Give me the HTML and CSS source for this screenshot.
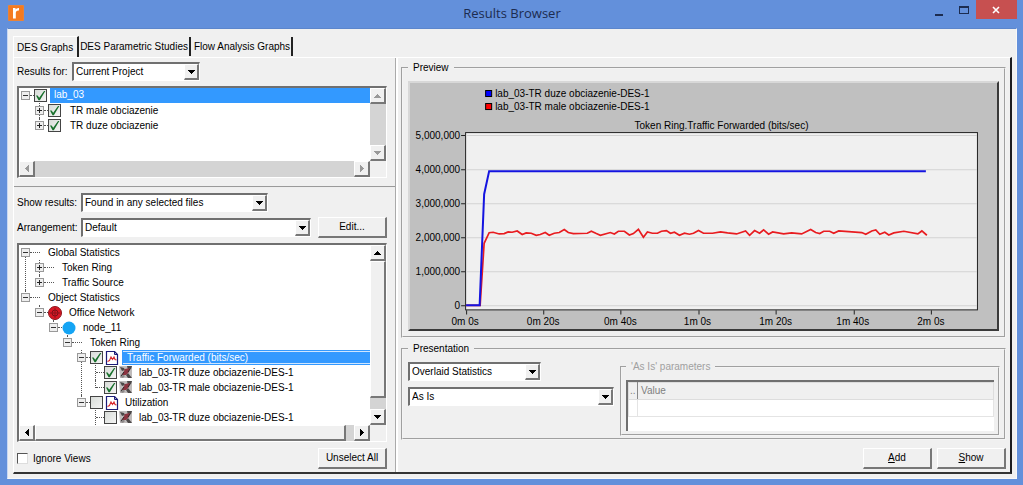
FILE: index.html
```html
<!DOCTYPE html>
<html lang="en">
<head>
<meta charset="utf-8">
<title>Results Browser</title>
<link rel="stylesheet" href="styles.css">
</head>
<body>
<svg class="defs" aria-hidden="true">
  <symbol id="up" viewBox="0 0 7 4"><path d="M3 0h1v1h1v1h1v1h1v1H0V3h1V2h1V1h1z"/></symbol>
  <symbol id="down" viewBox="0 0 7 4"><path d="M0 0h7v1H6v1H5v1H4v1H3V3H2V2H1V1H0z"/></symbol>
  <symbol id="left" viewBox="0 0 4 7"><path d="M4 0v7H3V6H2V5H1V4H0V3h1V2h1V1h1V0z"/></symbol>
  <symbol id="right" viewBox="0 0 4 7"><path d="M0 0v7h1V6h1V5h1V4h1V3H3V2H2V1H1V0z"/></symbol>
  <symbol id="graph" viewBox="0 0 14 14">
    <path d="M1.500.5h8l3 3v10h-11z" fill="#fff" stroke="#1c1c78" stroke-width="1.200"/>
    <path d="M9.500.5v3h3" fill="none" stroke="#1c1c78"/>
    <path d="M2.500 10.500l2-1 1.500-3.500 1.500 2.500 1.500-2.500 1 2.500 1.500.5" fill="none" stroke="#d8282c" stroke-width="1.100"/>
  </symbol>
  <symbol id="run" viewBox="0 0 14 14">
    <path d="M0 0h13v12H1z" fill="#c0bcbc"/>
    <path d="M1 1l4 1 1 2-3 1zM8 0h5l-1 3-3 1zM9 7l4 5H9L7 9z" fill="#4c4848"/>
    <path d="M1 11l3-3 2 2-2 2z" fill="#8c8888"/>
    <path d="M3 9l3-6 5-1-1 4-3 3z" fill="#8c3440"/>
    <path d="M2 10l3-4M9 6l2-3" stroke="#2c2828"/>
  </symbol>
</svg>

<header class="titlebar">
  <svg class="logo" viewBox="0 0 16 16" aria-hidden="true">
    <rect width="16" height="16" rx="1" fill="#e8833a"/>
    <rect x="1" y="1" width="14" height="14" fill="#f47a20"/>
    <path d="M5 13.500V3h2.500v1.500Q8.500 2.800 11 3v2.500Q7.800 5.200 7.800 8v5.500z" fill="#fff"/>
  </svg>
  <h1>Results Browser</h1>
  <div class="winbtns">
    <button class="win" aria-label="Minimize"><svg width="8" height="12"><path d="M0 10h8v2H0z" fill="#1c2c50"/></svg></button>
    <button class="win" aria-label="Maximize"><svg width="10" height="8"><path d="M0 0h10v8H0zM1 2v5h8V2z" fill="#1c2c50" fill-rule="evenodd"/></svg></button>
    <button class="win close" aria-label="Close"><svg width="8" height="8"><path d="M1 1l6 6M7 1L1 7" stroke="#fff" stroke-width="1.600"/></svg></button>
  </div>
</header>

<main class="client">
  <nav class="tabs" role="tablist">
    <button class="tab active" role="tab" aria-selected="true">DES Graphs</button>
    <button class="tab" role="tab">DES Parametric Studies</button>
    <button class="tab" role="tab">Flow Analysis Graphs</button>
  </nav>

  <div class="page">
    <section class="side">
      <div class="block files">
        <div class="field">
          <label for="results">Results for:</label>
          <span class="combo w-s"><select id="results"><option>Current Project</option></select><span class="drop"><svg width="7" height="4"><use href="#down"/></svg></span></span>
        </div>
        <div class="pane small off">
          <ul class="tree">
            <li>
              <div class="row"><button class="exp" aria-label="Collapse"></button><i class="dash"></i><input type="checkbox" id="c1" checked><label class="sel" for="c1">lab_03</label></div>
              <ul>
                <li><div class="row"><button class="exp plus" aria-label="Expand"></button><i class="dash"></i><input type="checkbox" id="c2" checked><label class="wide" for="c2">TR male obciazenie</label></div></li>
                <li><div class="row"><button class="exp plus" aria-label="Expand"></button><i class="dash"></i><input type="checkbox" id="c3" checked><label class="wide" for="c3">TR duze obciazenie</label></div></li>
              </ul>
            </li>
          </ul>
          <div class="vbar"><button class="sb" aria-label="Scroll up"><svg width="7" height="4"><use href="#up"/></svg></button><span class="track"></span><button class="sb" aria-label="Scroll down"><svg width="7" height="4"><use href="#down"/></svg></button></div>
          <div class="hbar"><button class="sb" aria-label="Scroll left"><svg width="4" height="7"><use href="#left"/></svg></button><span class="track"></span><button class="sb" aria-label="Scroll right"><svg width="4" height="7"><use href="#right"/></svg></button></div>
        </div>
      </div>

      <div class="block stats">
        <div class="field">
          <label class="lab" for="show">Show results:</label>
          <span class="combo w-m"><select id="show"><option>Found in any selected files</option></select><span class="drop"><svg width="7" height="4"><use href="#down"/></svg></span></span>
        </div>
        <div class="field arrange">
          <label class="lab" for="arr">Arrangement:</label>
          <span class="combo grow"><select id="arr"><option>Default</option></select><span class="drop"><svg width="7" height="4"><use href="#down"/></svg></span></span>
          <button class="btn">Edit...</button>
        </div>
        <div class="pane large">
          <ul class="tree">
            <li>
              <div class="row"><button class="exp" aria-label="Collapse"></button><i class="dash long"></i><span class="plain">Global Statistics</span></div>
              <ul>
                <li><div class="row"><button class="exp plus" aria-label="Expand"></button><i class="dash long"></i><span class="plain">Token Ring</span></div></li>
                <li><div class="row"><button class="exp plus" aria-label="Expand"></button><i class="dash long"></i><span class="plain">Traffic Source</span></div></li>
              </ul>
            </li>
            <li>
              <div class="row"><button class="exp" aria-label="Collapse"></button><i class="dash long"></i><span class="plain">Object Statistics</span></div>
              <ul>
                <li>
                  <div class="row"><button class="exp" aria-label="Collapse"></button><i class="dash"></i><svg class="ico" viewBox="0 0 14 14"><circle cx="7" cy="7" r="6.500" fill="#d81824" stroke="#8c141c"/><circle cx="7" cy="7" r="3" fill="none" stroke="#7c1018"/><path d="M7 2v10M2 7h10" stroke="#8c141c"/></svg><span class="near">Office Network</span></div>
                  <ul>
                    <li>
                      <div class="row"><button class="exp" aria-label="Collapse"></button><i class="dash"></i><svg class="ico" viewBox="0 0 14 14"><circle cx="7" cy="7" r="6.500" fill="#14a4f4"/></svg><span class="near">node_11</span></div>
                      <ul>
                        <li>
                          <div class="row"><button class="exp" aria-label="Collapse"></button><i class="dash long"></i><span class="plain">Token Ring</span></div>
                          <ul>
                            <li>
                              <div class="row"><button class="exp" aria-label="Collapse"></button><i class="dash"></i><input type="checkbox" id="t1" checked><svg class="ico"><use href="#graph"/></svg><label class="sel focus" for="t1">Traffic Forwarded (bits/sec)</label></div>
                              <ul>
                                <li><div class="row"><i class="dash leaf"></i><input type="checkbox" id="t2" checked><svg class="ico"><use href="#run"/></svg><label class="near" for="t2">lab_03-TR duze obciazenie-DES-1</label></div></li>
                                <li><div class="row"><i class="dash leaf"></i><input type="checkbox" id="t3" checked><svg class="ico"><use href="#run"/></svg><label class="near" for="t3">lab_03-TR male obciazenie-DES-1</label></div></li>
                              </ul>
                            </li>
                            <li>
                              <div class="row"><button class="exp" aria-label="Collapse"></button><i class="dash"></i><input type="checkbox" id="t4"><svg class="ico"><use href="#graph"/></svg><label class="near" for="t4">Utilization</label></div>
                              <ul>
                                <li><div class="row"><i class="dash leaf"></i><input type="checkbox" id="t5"><svg class="ico"><use href="#run"/></svg><label class="near" for="t5">lab_03-TR duze obciazenie-DES-1</label></div></li>
                                <li><div class="row"><i class="dash leaf"></i><svg class="ico next"><use href="#run"/></svg></div></li>
                              </ul>
                            </li>
                          </ul>
                        </li>
                      </ul>
                    </li>
                  </ul>
                </li>
              </ul>
            </li>
          </ul>
          <div class="vbar"><button class="sb" aria-label="Scroll up"><svg width="7" height="4"><use href="#up"/></svg></button><span class="thumb"></span><span class="track"></span><button class="sb" aria-label="Scroll down"><svg width="7" height="4"><use href="#down"/></svg></button></div>
          <div class="hbar"><button class="sb" aria-label="Scroll left"><svg width="4" height="7"><use href="#left"/></svg></button><span class="thumb"></span><span class="track"></span><button class="sb" aria-label="Scroll right"><svg width="4" height="7"><use href="#right"/></svg></button></div>
        </div>
        <div class="foot">
          <label class="ignore"><input class="box" type="checkbox"> Ignore Views</label>
          <button class="btn">Unselect All</button>
        </div>
      </div>
    </section>

    <section class="view">
      <fieldset class="preview">
        <legend>Preview</legend>
        <div class="chart">
          <svg viewBox="410 83 586 246" role="img" aria-label="Token Ring traffic forwarded">
            <g stroke="#000"><rect x="485.500" y="90.500" width="6" height="6" fill="#00f"/><rect x="485.500" y="103.500" width="6" height="6" fill="#f00"/></g>
            <text x="495" y="97">lab_03-TR duze obciazenie-DES-1</text>
            <text x="495" y="110">lab_03-TR male obciazenie-DES-1</text>
            <text class="mid" x="721" y="129">Token Ring.Traffic Forwarded (bits/sec)</text>
            <rect x="465.500" y="132.500" width="511" height="177" fill="#f0f0f0" stroke="#222"/>
            <path d="M467 135.500h509M467 169.500h509M467 203.500h509M467 237.500h509M467 271.500h509M467 305.500h509" stroke="#d2d2d2"/>
            <path d="M461 135.500h4M461 169.500h4M461 203.500h4M461 237.500h4M461 271.500h4M461 305.500h4M466.500 310v4M543.500 310v4M620.500 310v4M698.500 310v4M775.500 310v4M853.500 310v4M930.500 310v4" stroke="#222"/>
            <g class="end"><text x="460" y="139">5,000,000</text><text x="460" y="173">4,000,000</text><text x="460" y="207">3,000,000</text><text x="460" y="241">2,000,000</text><text x="460" y="275">1,000,000</text><text x="460" y="309">0</text></g>
            <g class="mid"><text x="465" y="325">0m 0s</text><text x="543" y="325">0m 20s</text><text x="620" y="325">0m 40s</text><text x="697" y="325">1m 0s</text><text x="775" y="325">1m 20s</text><text x="852" y="325">1m 40s</text><text x="930" y="325">2m 0s</text></g>
            <polyline fill="none" stroke="#e81c20" stroke-width="1.700" points="466,305 480,305 484,243 489,232.500 493,232 499,233.700 504,233.300 508,231.700 512,232 517,230.700 522,234.300 526,232.700 531,233 536,235 540,234.300 545,232.300 549,235 554,233 559,232.300 564,229.300 568,232.300 573,233.300 587,233 591,231 596,233.300 600,235 610,232.300 614,233.700 618,231 624,231 629,234.700 633,233.300 638,229 643,237 647,231.700 652,233 657,233 661,231 666,230.300 670,233 674,232 679,235 684,233 689,234 693,233 698,230.300 703,233 712,233 720,231.700 727,232.700 736,233.700 745,230.700 749,235 754,230.300 759,233 763,229.700 768,234 772,231.700 783,233.700 791,232.700 801,233.700 810,229.300 815,232.300 819,233.300 823,231 829,231 833,233 838,230.700 861,232.300 865,234 871,230.700 875,229.700 879,234 884,232 888,234.700 893,232.700 903,231 917,233.700 921,230.700 926,235"/>
            <polyline fill="none" stroke="#1414e0" stroke-width="2" points="466,305 479.500,305 484,194 489,171 925,171"/>
          </svg>
        </div>
      </fieldset>

      <fieldset class="present">
        <legend>Presentation</legend>
        <div class="cols">
          <div class="modes">
            <span class="combo w-p"><select aria-label="Layout"><option>Overlaid Statistics</option></select><span class="drop"><svg width="7" height="4"><use href="#down"/></svg></span></span>
            <span class="combo"><select aria-label="Filter"><option>As Is</option></select><span class="drop"><svg width="7" height="4"><use href="#down"/></svg></span></span>
          </div>
          <fieldset class="params" disabled>
            <legend>'As Is' parameters</legend>
            <div class="tablebox">
              <table>
                <thead><tr><th class="key">..</th><th>Value</th></tr></thead>
                <tbody><tr><td></td><td></td></tr></tbody>
              </table>
            </div>
          </fieldset>
        </div>
      </fieldset>

      <div class="actions">
        <button class="btn"><u>A</u>dd</button>
        <button class="btn"><u>S</u>how</button>
      </div>
    </section>
  </div>
</main>
</body>
</html>
```

FILE: styles.css
```css
* { box-sizing: border-box; }

body {
  margin: 0;
  min-height: 100vh;
  display: flex;
  flex-direction: column;
  padding: 0 6px 6px 7px;
  background: #6390db;
  color: #000;
  font: 10px/14px "Liberation Sans", Arial, sans-serif;
}

button, select, input { font: inherit; color: inherit; margin: 0; }
button { padding: 0; border: 0; white-space: nowrap; }
svg { display: block; }
.defs { position: absolute; width: 0; height: 0; }

/* Title bar */
.titlebar {
  display: grid;
  grid-template-columns: 90px 1fr 90px;
  height: 28px;
}
.logo { width: 16px; height: 16px; margin: 5px 0 0 1px; }
.titlebar h1 {
  margin: 0;
  font: 13px/27px "Open Sans", "Noto Sans", sans-serif;
  text-align: center;
  color: #1c2c50;
}
.winbtns { display: flex; justify-content: flex-end; height: 19px; }
.win {
  display: flex;
  align-items: center;
  justify-content: center;
  width: 25px;
  background: none;
}
.win.close { width: 42px; background: #c75050; }

/* Client area and tabs */
.client {
  flex: 1;
  display: flex;
  flex-direction: column;
  padding: 7px 4px 4px 5px;
  background: #f0f0f0;
  border: 1px solid #f8f8f8;
  border-top-color: #5c86cc;
  border-left-color: #c8d8f4;
}
.tabs { display: flex; align-items: flex-start; height: 21px; }
.tab {
  height: 19px;
  margin-top: 1px;
  padding: 0 1px;
  background: #f0f0f0;
  border-right: 2px solid #222;
}
.tab + .tab + .tab { padding-left: 3px; }
.tab.active {
  height: 22px;
  margin-top: 0;
  padding: 0 4px 0 3px;
  border-top: 1px solid #fff;
  border-left: 1px solid #fff;
}
.page {
  flex: 1;
  display: grid;
  grid-template-columns: minmax(300px, 382px) 1fr;
  border: solid;
  border-width: 1px 2px 2px 1px;
  border-color: #fff #1c1c20 #333 #fff;
}

/* Left side */
.side { display: flex; flex-direction: column; border-right: 1px solid #aaa; }
.block { padding: 0 8px 0 3px; }
.files { padding-top: 4px; padding-bottom: 8px; border-bottom: 2px groove #eee; }
.stats { padding-top: 5px; }
.field { display: flex; align-items: center; gap: 5px; height: 19px; }
.field > label { width: 50px; white-space: nowrap; }
.field > .lab { width: 59px; }
.arrange { margin-top: 5px; height: 21px; }
.arrange .btn { margin-left: 2px; }
.grow { flex: 1; }
.w-s { width: 128px; }
.w-m { width: 187px; }
.w-p { width: 133px; }

.combo {
  display: grid;
  grid-template-columns: 1fr 15px;
  height: 19px;
  background: #fff;
  border: solid;
  border-width: 2px 1px 1px 2px;
  border-color: #707070 #fff #fff #707070;
}
.combo select {
  grid-area: 1 / 1 / 2 / 3;
  min-width: 0;
  padding: 0 16px 0 2px;
  border: 0;
  background: #fff;
  appearance: none;
  outline: 0;
}
.drop {
  grid-area: 1 / 2;
  pointer-events: none;
  display: flex;
  align-items: center;
  justify-content: center;
}
.drop, .sb, .thumb {
  background: #f0f0f0;
  border: solid;
  border-width: 1px 2px 2px 1px;
  border-color: #fff #777 #777 #fff;
}
.btn {
  width: 69px;
  height: 21px;
  background: #f0f0f0;
  border: solid;
  border-width: 1px 2px 2px 1px;
  border-color: #fff #777 #777 #fff;
}

/* Scrolling panes */
.pane {
  display: grid;
  grid-template: minmax(0, 1fr) 16px / minmax(0, 1fr) 16px;
  background: #f0f0f0;
  border: solid;
  border-width: 2px 1px 1px 2px;
  border-color: #707070 #fff #fff #707070;
}
.small { height: 92px; margin-top: 5px; }
.large { height: 199px; margin-top: 5px; }
.vbar { display: flex; flex-direction: column; }
.hbar { display: flex; }
.sb {
  flex: none;
  width: 16px;
  height: 16px;
  display: flex;
  align-items: center;
  justify-content: center;
}
.off .sb { fill: #999; }
.track { flex: 1; background: #d4d4d4; }
.vbar .thumb { flex: 12; }
.hbar .thumb { flex: 38; }

/* Tree */
.tree { overflow: hidden; background: #fff; }
.tree, .tree ul { margin: 0; padding: 0; list-style: none; }
.tree li { position: relative; padding-left: 2px; }
.tree li li { padding-left: 0; }
.tree ul { margin-left: 14px; }
.tree li::before {
  content: "";
  position: absolute;
  top: 0;
  bottom: 0;
  left: 4px;
  border-left: 1px dotted #555;
}
.tree > li::before { left: 6px; top: 8px; }
.tree li:last-child::before { bottom: auto; height: 8px; }
.tree > li:last-child::before { top: 0; }
.tree > li:only-child::before { height: 0; }
.row { position: relative; display: flex; align-items: center; height: 15px; white-space: nowrap; }
.exp {
  flex: none;
  width: 9px;
  height: 9px;
  border: 1px solid #999;
  background: linear-gradient(#333, #333) center / 5px 1px no-repeat, #eee;
}
.exp.plus {
  background:
    linear-gradient(#222, #222) center / 5px 1px no-repeat,
    linear-gradient(#222, #222) center / 1px 5px no-repeat, #eee;
}
.dash { flex: none; width: 4px; border-top: 1px dotted #555; }
.dash.long { width: 10px; }
.dash.leaf { width: 8px; margin-left: 5px; }
.tree input {
  flex: none;
  appearance: none;
  width: 13px;
  height: 13px;
  border: 1px solid #444;
  background: linear-gradient(135deg, #d8dcd8, #f4f4f4);
}
.tree input:checked::before {
  content: "";
  display: block;
  width: 11px;
  height: 11px;
  background: #18702c;
  clip-path: polygon(9% 50%, 24% 50%, 38% 70%, 82% 9%, 94% 9%, 44% 94%, 32% 94%);
}
.ico { flex: none; width: 14px; height: 14px; }
.tree input + .ico { margin-left: 2px; }
.ico.next { margin-left: 15px; }
.plain { padding-left: 8px; }
.near { padding-left: 7px; }
.tree input + .ico + .near { padding-left: 6px; }
.wide { padding-left: 9px; }
.sel { flex: 1; height: 15px; margin-left: 3px; padding-left: 4px; background: #3399ff; color: #fff; }
.focus { border: 1px solid #3399ff; border-right: 0; box-shadow: inset 0 1px #cfe6ff, inset 0 -1px #cfe6ff; line-height: 13px; }

.foot { display: flex; justify-content: space-between; align-items: center; margin-top: 6px; }
.ignore { display: flex; align-items: center; gap: 5px; }
.box {
  appearance: none;
  width: 11px;
  height: 11px;
  background: #fff;
  border: solid;
  border-width: 1px;
  border-color: #555 #ddd #ddd #555;
}

/* Right side */
.view { display: flex; flex-direction: column; padding: 3px 4px 3px 3px; border-left: 2px solid #fff; min-width: 0; }
fieldset { min-width: 0; margin: 0; border: 2px groove #f4f4f4; }
legend { height: 14px; margin: 0; padding: 0 5px; }
.preview { padding: 6px 5px 5px; }
.chart {
  background: #c0c0c0;
  border: 2px solid;
  border-color: #d8d8d8 #3a3a3a #3a3a3a #d8d8d8;
}
.chart svg { width: 100%; height: auto; }
.chart text { font: 10px "Liberation Sans", Arial, sans-serif; fill: #000; }
.chart .mid { text-anchor: middle; }
.chart .end { text-anchor: end; }

.present { margin-top: 4px; padding: 4px 4px 2px 5px; }
.cols { display: grid; grid-template-columns: 206px 1fr; gap: 6px; }
.modes { display: flex; flex-direction: column; gap: 6px; padding-top: 2px; }
.params { padding: 6px 4px 3px; color: #a0a0a0; }
.tablebox {
  height: 51px;
  background: #fff;
  border: solid #707070;
  border-width: 2px 0 0 2px;
}
table { width: 100%; border-collapse: collapse; table-layout: fixed; }
th { height: 17px; padding: 0 3px; background: #f0f0f0; font-weight: normal; text-align: left; color: #808080; border: 1px solid #ddd; }
th.key { width: 9px; padding: 0 1px; border-right-color: #888; }
td { height: 17px; padding: 0; border: 1px solid #e4e4e4; }
.actions { display: flex; justify-content: flex-end; gap: 5px; margin-top: 8px; }
```
